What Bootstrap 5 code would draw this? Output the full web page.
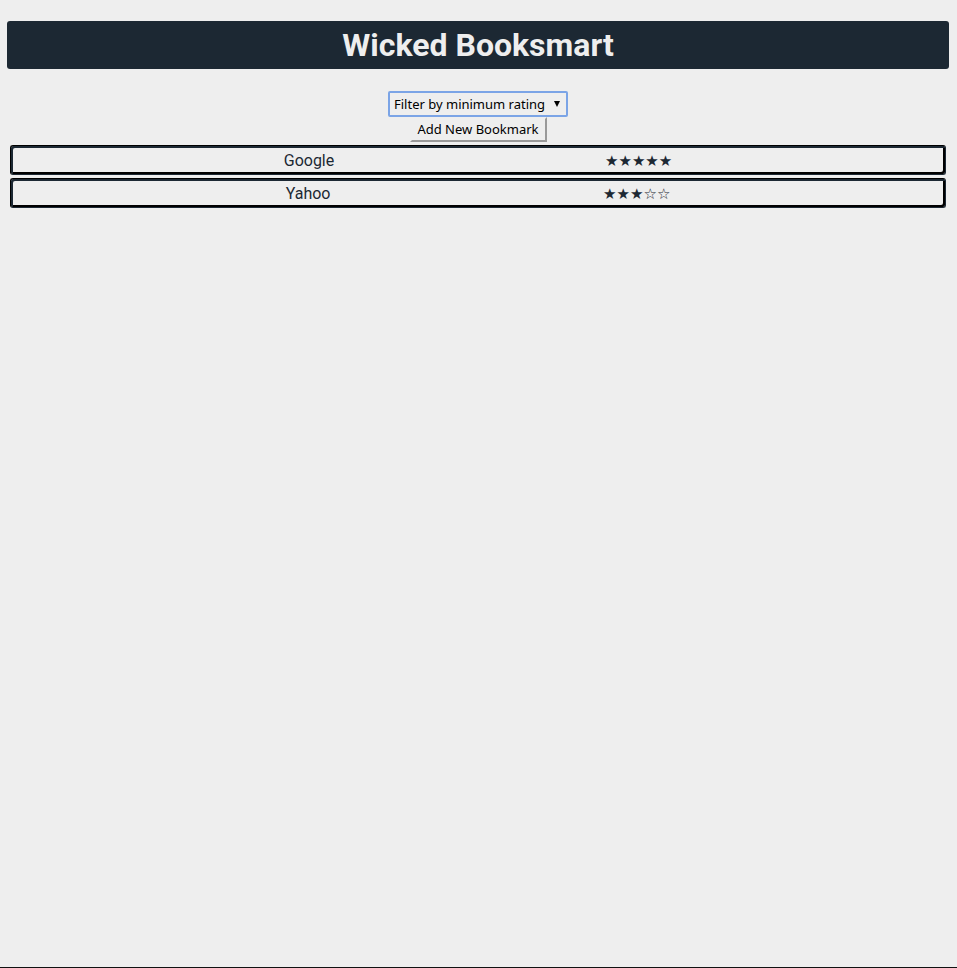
<!DOCTYPE html>
<html lang="en">
<head>
<meta charset="utf-8">
<meta name="viewport" content="width=device-width, initial-scale=1">
<title>Wicked Booksmart</title>
<link href="https://cdn.jsdelivr.net/npm/bootstrap@5.3.0/dist/css/bootstrap.min.css" rel="stylesheet">
<style>
  body {
    background: #eee;
    color: #1c2833;
    font-family: Roboto, "Noto Sans", sans-serif;
    border-bottom: 1px solid #111;
    padding: 21px 8px 0 7px;
  }
  .site-title {
    background: #1c2833;
    color: #eee;
    border-radius: 3px;
    font-size: 32px;
    line-height: 48px;
    margin-bottom: 22px;
  }
  .rating-filter {
    appearance: none;
    width: 180px;
    height: 26px;
    padding: 2px 4px 0;
    border: 2px solid #7ba4e6;
    border-radius: 2px;
    outline: 0;
    background: #eee;
    color: #000;
    font-family: "Noto Sans", sans-serif;
    font-size: 13px;
  }
  .filter-arrow {
    right: 8px;
    top: 10px;
    width: 6px;
    height: 6px;
    pointer-events: none;
  }
  .add-button {
    width: 137px;
    height: 25px;
    padding: 0 0 2px;
    border: 2px solid;
    border-color: #eee #999 #999 #eee;
    background: #eee;
    color: #000;
    font-family: "Noto Sans", sans-serif;
    font-size: 13px;
    line-height: 18px;
  }
  .bookmarks { padding: 3px; gap: 3px; }
  .bookmark {
    height: 30px;
    padding: 3px 2px 1px;
    border: 1px solid;
    border-color: #000 #1c2833 #1c2833 #000;
    box-shadow: inset 2px 2px #1c2833, inset -2px -2px #000;
    border-radius: 3px;
    font-size: 16px;
    line-height: 24px;
  }
  .bookmark a { color: inherit; }
  .stars { font-family: "DejaVu Sans", sans-serif; font-size: 15px; }
</style>
<script src="https://cdn.jsdelivr.net/npm/bootstrap@5.3.0/dist/js/bootstrap.bundle.min.js" defer></script>
</head>
<body class="min-vh-100 text-center">
  <header><h1 class="site-title fw-bold">Wicked Booksmart</h1></header>
  <main>
    <div class="d-flex flex-column align-items-center">
      <div class="position-relative d-flex">
        <select class="rating-filter" aria-label="Filter by minimum rating">
          <option>Filter by minimum rating</option>
          <option>5 stars</option>
          <option>4 stars</option>
          <option>3 stars</option>
          <option>2 stars</option>
          <option>1 star</option>
        </select>
        <svg class="filter-arrow position-absolute" viewBox="0 0 6 6" aria-hidden="true"><path d="M0 0h6L3 6z"/></svg>
      </div>
      <button type="button" class="add-button">Add New Bookmark</button>
    </div>
    <ul class="bookmarks list-unstyled d-flex flex-column mb-0">
      <li class="bookmark d-flex justify-content-evenly"><a href="#google" class="text-decoration-none">Google</a><span class="stars">★★★★★</span></li>
      <li class="bookmark d-flex justify-content-evenly"><a href="#yahoo" class="text-decoration-none">Yahoo</a><span class="stars">★★★☆☆</span></li>
    </ul>
  </main>
</body>
</html>
